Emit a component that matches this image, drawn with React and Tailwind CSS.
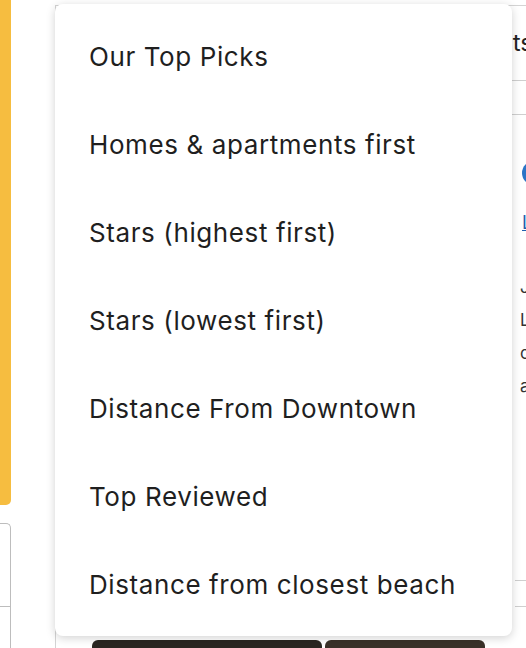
import React from 'react'

const options = [
  'Our Top Picks',
  'Homes & apartments first',
  'Stars (highest first)',
  'Stars (lowest first)',
  'Distance From Downtown',
  'Top Reviewed',
  'Distance from closest beach',
]

export default function App() {
  return (
    <div className="relative w-[526px] h-[648px] overflow-hidden bg-white font-['Inter','Noto_Sans',sans-serif] text-[#1a1a1a]">
      {/* page behind the menu */}
      <div className="flex h-full">
        <div className="w-[11px] shrink-0 flex flex-col">
          <div className="h-[505px] bg-[#f6bd40] rounded-br-[5px]" />
          <div className="mt-[18px] flex-1 border-t border-r border-[#bdbdbd] rounded-tr-[5px]">
            <div className="h-[83px] border-b border-[#bdbdbd]" />
          </div>
        </div>
        <div className="ml-[44px] mt-[5px] flex-1 min-w-0 border-l border-t border-[#d4d4d4] flex flex-col">
          <div className="h-[75px] border-b border-[#cfcfcf] pt-[22px] -mr-[7px] text-right text-[24px] leading-[30px] whitespace-nowrap text-[#222]">
            Search results
          </div>
          <div className="h-[34px] border-b border-[#cfcfcf]" />
          <div className="flex flex-1">
            <div className="w-[459px] shrink-0" />
            <div className="flex-1 min-w-0 flex flex-col">
              <div className="pl-[7px] pt-[46px]">
                <div className="w-[24px] h-[24px] rounded-full bg-[#2b74c6]" />
              </div>
              <div className="pl-[7px] pt-[26px] text-[18px] leading-[24px] text-[#1f5fae] underline whitespace-nowrap">Location</div>
              <div className="pl-[5px] pt-[36px] text-[17px] leading-[33px] text-[#333] whitespace-nowrap">
                <div>Jul</div>
                <div>Lo</div>
                <div>cl</div>
                <div>ar</div>
              </div>
              <div className="mt-auto mb-[33px] border-t border-[#cfcfcf]">
                <div className="h-[26px] border-b border-[#cfcfcf]" />
              </div>
            </div>
          </div>
          <div className="flex gap-[3px] pl-[36px] h-[8px]">
            <div className="w-[230px] rounded-t-[6px] bg-[#2a2722]" />
            <div className="w-[160px] rounded-t-[6px] bg-[#3a3129]" />
          </div>
        </div>
      </div>

      {/* sort dropdown */}
      <div className="absolute left-[55px] top-[4px] w-[457px] bg-white rounded-[8px] shadow-[0_2px_10px_rgba(0,0,0,0.18)] py-[8px]">
        <ul>
          {options.map((label) => (
            <li key={label} className="h-[88px] flex items-center pl-[34px] text-[26px] text-[#1f1f1f] tracking-[0.6px] whitespace-nowrap">
              {label}
            </li>
          ))}
        </ul>
      </div>
    </div>
  )
}
